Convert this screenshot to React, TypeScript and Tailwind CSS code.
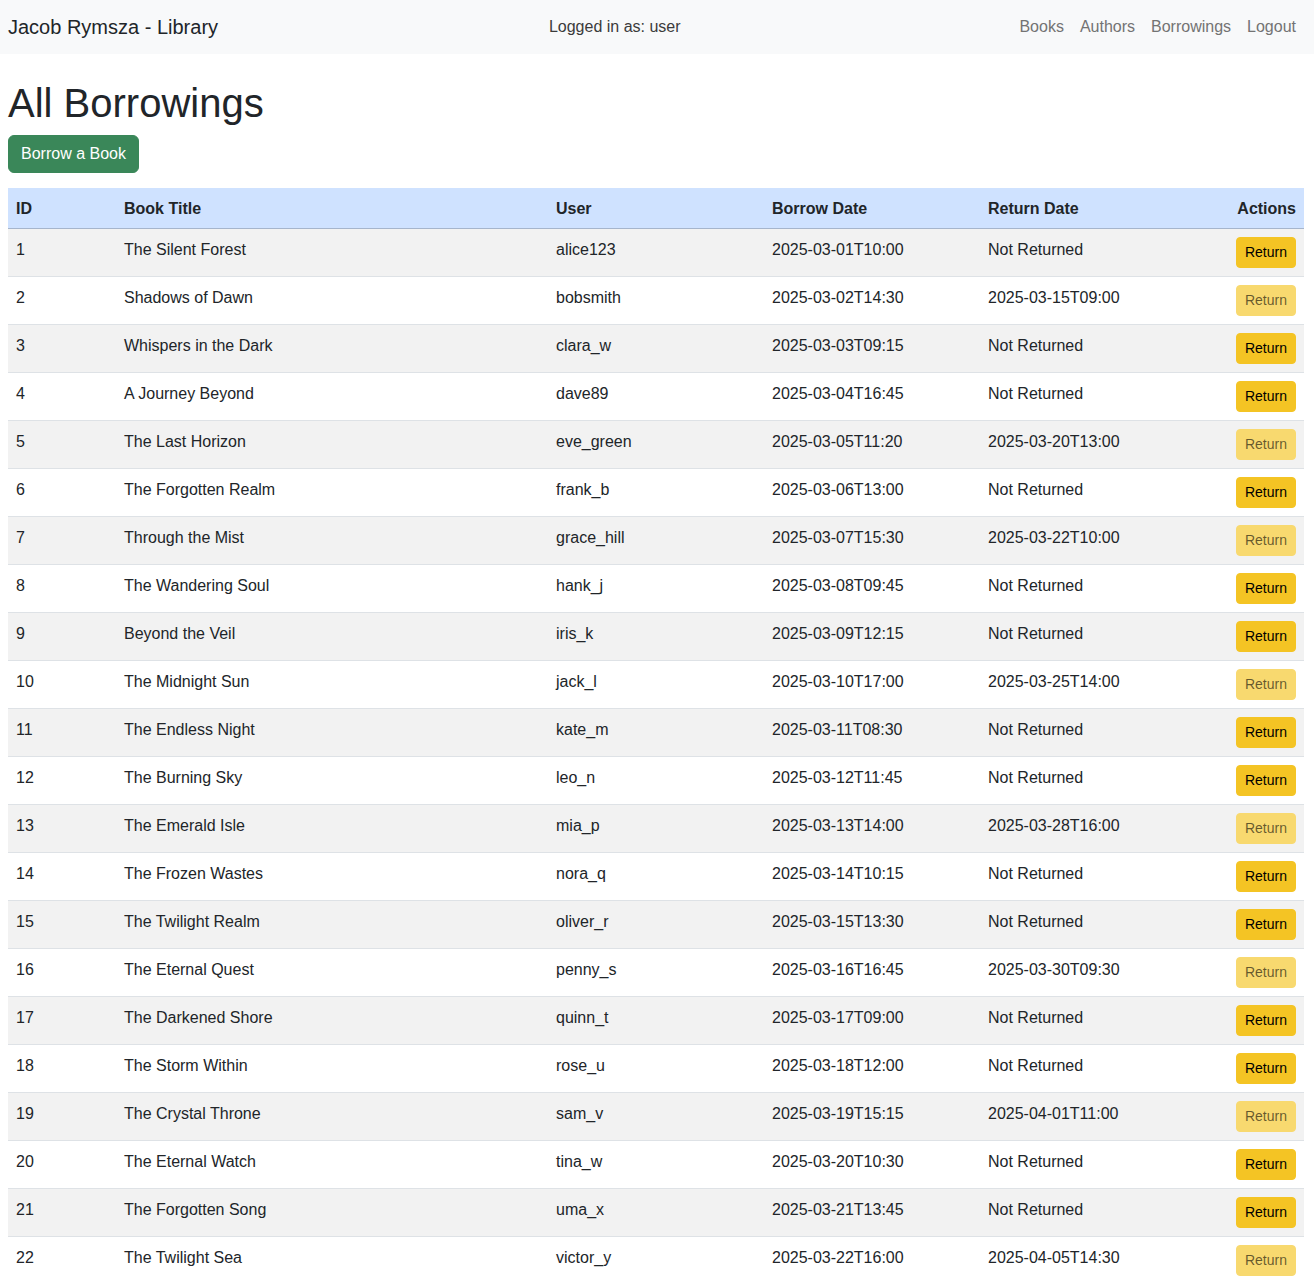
const rows: [number, string, string, string, string | null][] = [
  [1, 'The Silent Forest', 'alice123', '2025-03-01T10:00', null],
  [2, 'Shadows of Dawn', 'bobsmith', '2025-03-02T14:30', '2025-03-15T09:00'],
  [3, 'Whispers in the Dark', 'clara_w', '2025-03-03T09:15', null],
  [4, 'A Journey Beyond', 'dave89', '2025-03-04T16:45', null],
  [5, 'The Last Horizon', 'eve_green', '2025-03-05T11:20', '2025-03-20T13:00'],
  [6, 'The Forgotten Realm', 'frank_b', '2025-03-06T13:00', null],
  [7, 'Through the Mist', 'grace_hill', '2025-03-07T15:30', '2025-03-22T10:00'],
  [8, 'The Wandering Soul', 'hank_j', '2025-03-08T09:45', null],
  [9, 'Beyond the Veil', 'iris_k', '2025-03-09T12:15', null],
  [10, 'The Midnight Sun', 'jack_l', '2025-03-10T17:00', '2025-03-25T14:00'],
  [11, 'The Endless Night', 'kate_m', '2025-03-11T08:30', null],
  [12, 'The Burning Sky', 'leo_n', '2025-03-12T11:45', null],
  [13, 'The Emerald Isle', 'mia_p', '2025-03-13T14:00', '2025-03-28T16:00'],
  [14, 'The Frozen Wastes', 'nora_q', '2025-03-14T10:15', null],
  [15, 'The Twilight Realm', 'oliver_r', '2025-03-15T13:30', null],
  [16, 'The Eternal Quest', 'penny_s', '2025-03-16T16:45', '2025-03-30T09:30'],
  [17, 'The Darkened Shore', 'quinn_t', '2025-03-17T09:00', null],
  [18, 'The Storm Within', 'rose_u', '2025-03-18T12:00', null],
  [19, 'The Crystal Throne', 'sam_v', '2025-03-19T15:15', '2025-04-01T11:00'],
  [20, 'The Eternal Watch', 'tina_w', '2025-03-20T10:30', null],
  [21, 'The Forgotten Song', 'uma_x', '2025-03-21T13:45', null],
  [22, 'The Twilight Sea', 'victor_y', '2025-03-22T16:00', '2025-04-05T14:30'],
]

export default function App() {
  return (
    <div className="min-h-screen bg-white text-[#212529] font-['Liberation_Sans',Arial,sans-serif] text-base leading-6">
      <nav className="h-[54px] bg-[#f8f9fa] flex items-center justify-between pl-2 pr-[10px]">
        <a className="text-xl leading-[30px] text-[#212529]">Jacob Rymsza - Library</a>
        <span className="text-[#3b3b3b]">Logged in as: user</span>
        <div className="flex">
          {['Books', 'Authors', 'Borrowings', 'Logout'].map((l) => (
            <a key={l} className="px-2 py-2 text-[#737373]">
              {l}
            </a>
          ))}
        </div>
      </nav>

      <div className="pl-2 pr-[10px] mt-[25px]">
        <h1 className="text-[40px] leading-[48px] font-normal mb-2">All Borrowings</h1>
        <button className="bg-[#3a8759] text-white border border-[#3a8759] rounded-md px-3 py-1.5 leading-6">
          Borrow a Book
        </button>

        <table className="w-full mt-[15px] border-collapse table-fixed">
          <colgroup>
            <col className="w-[108px]" />
            <col className="w-[432px]" />
            <col className="w-[216px]" />
            <col className="w-[216px]" />
            <col className="w-[216px]" />
            <col className="w-[108px]" />
          </colgroup>
          <thead>
            <tr className="bg-[#cfe2ff] border-b border-[#a6b5cc] text-left">
              <th className="px-2 pt-[9px] pb-[7px] font-bold">ID</th>
              <th className="px-2 pt-[9px] pb-[7px] font-bold">Book Title</th>
              <th className="px-2 pt-[9px] pb-[7px] font-bold">User</th>
              <th className="px-2 pt-[9px] pb-[7px] font-bold">Borrow Date</th>
              <th className="px-2 pt-[9px] pb-[7px] font-bold">Return Date</th>
              <th className="px-2 pt-[9px] pb-[7px] font-bold text-right">Actions</th>
            </tr>
          </thead>
          <tbody>
            {rows.map(([id, title, user, borrowed, returned], i) => (
              <tr
                key={id}
                className={`border-b border-[#dee2e6] align-top ${i % 2 === 0 ? 'bg-[#f2f2f2]' : 'bg-white'}`}
              >
                <td className="px-2 pt-[9px] pb-[7px]">{id}</td>
                <td className="px-2 pt-[9px] pb-[7px]">{title}</td>
                <td className="px-2 pt-[9px] pb-[7px]">{user}</td>
                <td className="px-2 pt-[9px] pb-[7px]">{borrowed}</td>
                <td className="px-2 pt-[9px] pb-[7px]">{returned ?? 'Not Returned'}</td>
                <td className="p-2 text-right">
                  <button
                    disabled={returned !== null}
                    className={`text-sm leading-[21px] px-2 py-1 border rounded-[4px] ${
                      returned
                        ? 'bg-[#f8d96f] border-[#f8d96f] text-black/60'
                        : 'bg-[#f4c424] border-[#f4c424] text-black'
                    }`}
                  >
                    Return
                  </button>
                </td>
              </tr>
            ))}
          </tbody>
        </table>
      </div>
    </div>
  )
}
